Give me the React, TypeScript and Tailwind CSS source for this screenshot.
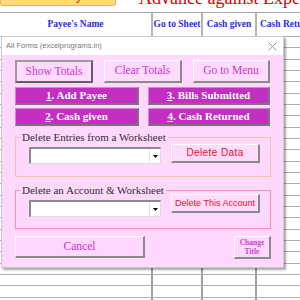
import React from "react";

const rows = Array.from({ length: 24 });

function Combo() {
  return (
    <div className="mt-[4px] w-[132px] h-[17px] bg-white border-t-2 border-l-2 border-[#8a8a8a] border-b border-r border-b-[#dcdcdc] border-r-[#dcdcdc] flex justify-end">
      <div className="w-[11px] h-full border-l border-[#e4e4e4] flex items-center justify-center">
        <svg width="5" height="3" viewBox="0 0 5 3">
          <path d="M0 0 L5 0 L2.5 3 Z" fill="#000" />
        </svg>
      </div>
    </div>
  );
}

function PurpleBtn({ n, label }: { n: string; label: string }) {
  return (
    <div className="h-[18px] bg-[#c22fc1] border-t border-l border-[#d985d8] border-b-2 border-r-2 border-b-[#777] border-r-[#777] flex items-center justify-center text-white font-bold text-[11px] leading-none">
      <span className="underline">{n}</span>
      <span>. {label}</span>
    </div>
  );
}

function LightBtn({ children, strong }: { children: React.ReactNode; strong?: boolean }) {
  return (
    <div
      className={
        "h-[23px] bg-[#ffdcff] flex items-center justify-center text-[#cc33cc] text-[11.5px] leading-none " +
        (strong
          ? "border-2 border-[#9a9a9a] border-b-[#606060] border-r-[#606060]"
          : "border-t border-l border-white border-b-2 border-r-2 border-b-[#8a8a8a] border-r-[#8a8a8a]")
      }
    >
      {children}
    </div>
  );
}

export default function App() {
  return (
    <div className="relative w-[300px] h-[300px] overflow-hidden bg-white font-['Liberation_Serif',serif]">
      {/* top strip */}
      <div className="flex h-[13px] border-b border-[#a8a8a8] overflow-hidden">
        <div className="shrink-0 w-[116px] h-[6px] bg-[#ffd97c] border border-t-0 border-[#f0b44c] rounded-b-[3px] overflow-hidden flex justify-center">
          <span className="text-[#e03030] text-[14px] leading-[14px] -mt-[12px] ml-[12px] font-['Liberation_Sans',sans-serif] whitespace-nowrap">Add Payee</span>
        </div>
        <div className="shrink-0 ml-[23px] -mt-[11px] text-[#e00000] text-[18px] leading-[18px] whitespace-nowrap">
          Advance against Expenses
        </div>
      </div>
      {/* header */}
      <div className="grid grid-cols-[151px_50px_54px_45px] h-[23px] text-[#2a2aff] font-bold text-[9.5px] leading-none">
        <div className="flex items-center justify-center">Payee's Name</div>
        <div className="flex items-center justify-center border-l-2 border-[#b5b5b5] whitespace-nowrap">Go to Sheet</div>
        <div className="flex items-center justify-center border-l-2 border-[#b5b5b5] whitespace-nowrap">Cash given</div>
        <div className="flex items-center pl-[3px] border-l-2 border-[#b5b5b5] whitespace-nowrap overflow-hidden">Cash Returned</div>
      </div>
      {/* rows */}
      <div className="border-t border-[#b0b0b0]">
        {rows.map((_, i) => (
          <div key={i} className="grid grid-cols-[151px_50px_54px_45px] h-[11.33px] box-border border-b border-[#b0b0b0]">
            <div />
            <div className="border-l-2 border-[#a0a0a0]" />
            <div className="border-l-2 border-[#a0a0a0]" />
            <div className="border-l-2 border-[#a0a0a0]" />
          </div>
        ))}
      </div>

      {/* dialog */}
      <div className="absolute left-[1px] top-[36px] w-[283px] h-[232px] bg-[#ffd8fd] border border-[#c9c9c9] shadow-[2px_2px_2px_rgba(0,0,0,0.35)] flex flex-col">
        <div className="h-[18px] bg-white flex items-center justify-between pl-[4px] pr-[6px]">
          <span className="text-[7.5px] text-[#7a7a7a] font-['Liberation_Sans',sans-serif]">All Forms (excelprograms.in)</span>
          <svg width="9" height="9" viewBox="0 0 9 9">
            <path d="M0.5 0.5 L8.5 8.5 M8.5 0.5 L0.5 8.5" stroke="#9a9a9a" strokeWidth="1" />
          </svg>
        </div>
        <div className="pt-[5px] pl-[13px] w-[269px]">
          <div className="flex gap-[11px]">
            <div className="w-[78px]"><LightBtn strong>Show Totals</LightBtn></div>
            <div className="w-[78px]"><LightBtn>Clear Totals</LightBtn></div>
            <div className="w-[77px]"><LightBtn>Go to Menu</LightBtn></div>
          </div>
          <div className="mt-[4px] grid grid-cols-[124px_122px] gap-x-[9px] gap-y-[3px]">
            <PurpleBtn n="1" label="Add Payee" />
            <PurpleBtn n="3" label="Bills Submitted" />
            <PurpleBtn n="2" label="Cash given" />
            <PurpleBtn n="4" label="Cash Returned" />
          </div>

          <fieldset className="mt-[5px] w-[256px] border border-[#ffbea6] pb-[12px]">
            <legend className="ml-[4px] px-[2px] text-[11px] leading-[12px] text-[#303030] font-['Liberation_Serif',serif]">Delete Entries from a Worksheet</legend>
            <div className="flex items-start pl-[13px]">
              <Combo />
              <div className="ml-[10px] mt-[1px] w-[89px] h-[19px] bg-[#ffdcfd] border-t border-l border-white border-b-2 border-r-2 border-b-[#8a8a8a] border-r-[#8a8a8a] flex items-center justify-center text-[#f01020] text-[10px] leading-none font-['Liberation_Sans',sans-serif] tracking-[0.4px]">
                Delete Data
              </div>
            </div>
          </fieldset>

          <fieldset className="mt-[7px] w-[256px] border border-[#ff90aa] pb-[11px]">
            <legend className="ml-[4px] px-[2px] text-[11px] leading-[12px] text-[#303030] font-['Liberation_Serif',serif]">Delete an Account &amp; Worksheet</legend>
            <div className="flex items-start pl-[13px]">
              <Combo />
              <div className="ml-[10px] mt-[-2px] w-[89px] h-[19px] bg-[#ffdcfd] border-t border-l border-white border-b-2 border-r-2 border-b-[#8a8a8a] border-r-[#8a8a8a] flex items-center justify-center text-[#f01020] text-[9px] leading-none font-['Liberation_Sans',sans-serif] whitespace-nowrap">
                Delete This Account
              </div>
            </div>
          </fieldset>

          <div className="mt-[7px] w-[256px] flex justify-between items-start">
            <div className="w-[130px] h-[22px] bg-[#ffd8fd] border-t border-l border-white border-b-2 border-r-2 border-b-[#8a8a8a] border-r-[#8a8a8a] flex items-center justify-center text-[#cc33cc] text-[11.5px] leading-none">
              Cancel
            </div>
            <div className="w-[37px] h-[23px] bg-[#ffd8fd] border-t border-l border-white border-b-2 border-r-2 border-b-[#8a8a8a] border-r-[#8a8a8a] flex flex-col items-center justify-center text-[#cc44cc] text-[7.5px] leading-[9px] font-bold">
              <span>Change</span>
              <span>Title</span>
            </div>
          </div>
        </div>
      </div>
    </div>
  );
}
